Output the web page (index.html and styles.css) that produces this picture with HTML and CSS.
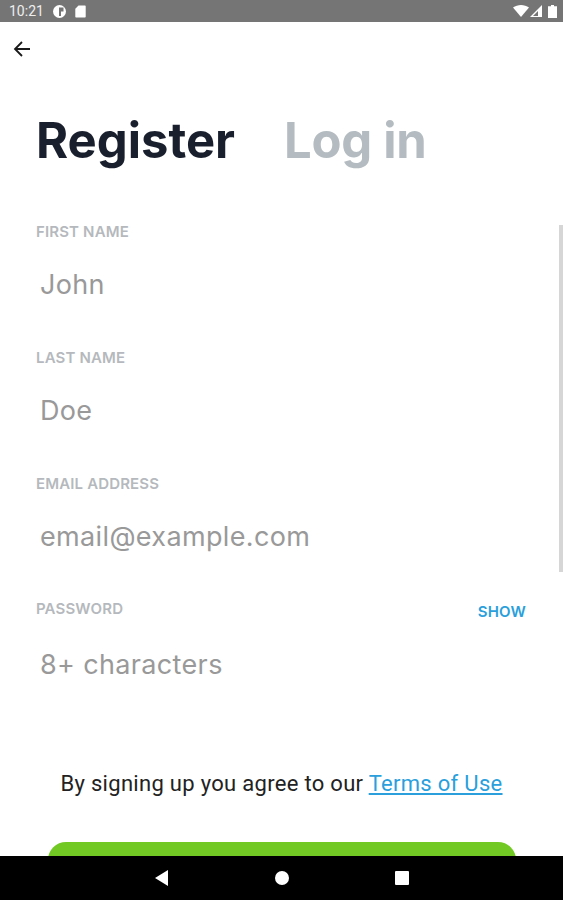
FILE: index.html
```html
<!DOCTYPE html>
<html lang="en">
<head>
  <meta charset="UTF-8">
  <meta name="viewport" content="width=device-width, initial-scale=1.0">
  <title>Register</title>
  <link rel="stylesheet" href="styles.css">
</head>
<body>
  <div class="status-bar">
    <div class="status-left">
      <span class="time">10:21</span>
      <svg width="13" height="13" viewBox="0 0 13 13"><circle cx="6.5" cy="6.5" r="6.500" fill="#fff"/><path d="M6 2.500h4.500v4H8V11H6z" fill="#757575"/></svg>
      <svg width="11" height="13" viewBox="0 0 11 13"><path d="M3.500.5H10a.7.7 0 0 1 .7.7v10.600a.7.7 0 0 1-.7.7H1a.7.7 0 0 1-.7-.7V3.700z" fill="#fff"/></svg>
    </div>
    <div class="status-right">
      <svg class="wifi" width="16" height="12" viewBox="0 0 16 12"><path d="M0 2.600C4.500-.8 11.500-.8 16 2.600L8 12z" fill="#fff"/></svg>
      <svg class="signal" width="12" height="12" viewBox="0 0 12 12"><path d="M12 0v12H0z" fill="#fff"/><path d="M8 6v5H3z" fill="#757575"/></svg>
      <svg width="9" height="13" viewBox="0 0 9 13"><path d="M3 0h3v1.200h3V13H0V1.200h3z" fill="#fff"/></svg>
    </div>
  </div>

  <div class="screen">
    <div class="toolbar">
      <svg width="18" height="18" viewBox="0 0 18 18"><path d="M17 9H2M9 2 2 9l7 7" fill="none" stroke="#1a1a1a" stroke-width="1.800"/></svg>
    </div>

    <div class="tabs">
      <span class="tab active">Register</span>
      <span class="tab">Log in</span>
    </div>

    <div class="field">
      <label class="field-label">FIRST NAME</label>
      <div class="placeholder">John</div>
    </div>
    <div class="field">
      <label class="field-label">LAST NAME</label>
      <div class="placeholder">Doe</div>
    </div>
    <div class="field">
      <label class="field-label">EMAIL ADDRESS</label>
      <div class="placeholder">email@example.com</div>
    </div>
    <div class="field">
      <div class="label-row">
        <label class="field-label">PASSWORD</label>
        <span class="show">SHOW</span>
      </div>
      <div class="placeholder">8+ characters</div>
    </div>

    <p class="terms">By signing up you agree to our <a href="#">Terms of Use</a></p>
    <div class="submit"></div>
    <div class="scrollbar"></div>
  </div>

  <div class="nav-bar">
    <svg width="14" height="16" viewBox="0 0 14 16"><path d="M13 0v16L0 8z" fill="#fff"/></svg>
    <svg width="14" height="14" viewBox="0 0 14 14"><circle cx="7" cy="7" r="7" fill="#fff"/></svg>
    <svg width="14" height="14" viewBox="0 0 14 14"><rect width="14" height="14" rx="1" fill="#fff"/></svg>
  </div>
</body>
</html>
```

FILE: styles.css
```css
body {
  margin: 0;
  height: 900px;
  display: flex;
  flex-direction: column;
  overflow: hidden;
  font-family: Inter, sans-serif;
  background-color: #fff;
}
.status-bar {
  height: 22px;
  flex: none;
  display: flex;
  justify-content: space-between;
  align-items: center;
  padding: 0 6px 0 9px;
  background-color: #757575;
  color: #fff;
}
.status-left, .status-right {
  display: flex;
  align-items: center;
}
.status-left {
  gap: 9px;
}
.status-right {
  gap: 6px;
}
.wifi {
  margin-right: -5px;
}
.time {
  font-family: Roboto, sans-serif;
  font-size: 14px;
  color: #eee;
}
.screen {
  position: relative;
  flex: 1;
  min-height: 0;
  overflow: hidden;
  padding: 0 37px 0 36px;
}
.toolbar {
  height: 54px;
  margin-left: -23px;
  display: flex;
  align-items: center;
}
.tabs {
  display: flex;
  gap: 49px;
  margin: 10px 0 12px;
  height: 108px;
  align-items: center;
  font-size: 49px;
  font-weight: 700;
}
.tab {
  color: #b4bcc1;
  letter-spacing: -0.3px;
}
.tab.active {
  color: #1a1f2e;
  letter-spacing: 0;
}
.field {
  height: 126px;
  padding-top: 17px;
  box-sizing: border-box;
}
.field-label {
  display: block;
  height: 17px;
  line-height: 17px;
  font-size: 15px;
  font-weight: 600;
  letter-spacing: 0.15px;
  color: #b5b9bd;
}
.label-row {
  display: flex;
  justify-content: space-between;
  align-items: flex-start;
  margin-top: -1px;
}
.label-row + .placeholder {
  margin-top: 28px;
}
.show {
  margin-top: 2px;
  font-size: 15px;
  font-weight: 600;
  letter-spacing: 0.2px;
  color: #2a9fdc;
}
.placeholder {
  margin: 29px 0 0 4px;
  font-size: 27px;
  letter-spacing: 0.35px;
  line-height: 32px;
  color: #999;
}
.terms {
  margin: 59px 0 0;
  padding-left: 1px;
  text-align: center;
  font-family: Roboto, sans-serif;
  font-size: 22px;
  letter-spacing: 0.3px;
  line-height: 30px;
  color: #222;
}
.terms a {
  color: #2a9fdc;
}
.submit {
  margin: 43px 10px 0 12px;
  height: 50px;
  border-radius: 18px;
  background-color: #72c924;
}
.scrollbar {
  position: absolute;
  right: 0;
  top: 203px;
  width: 4px;
  height: 347px;
  background-color: #d6d6d6;
}
.nav-bar {
  height: 44px;
  flex: none;
  display: flex;
  justify-content: center;
  align-items: center;
  gap: 106px;
  background-color: #000;
}
```
